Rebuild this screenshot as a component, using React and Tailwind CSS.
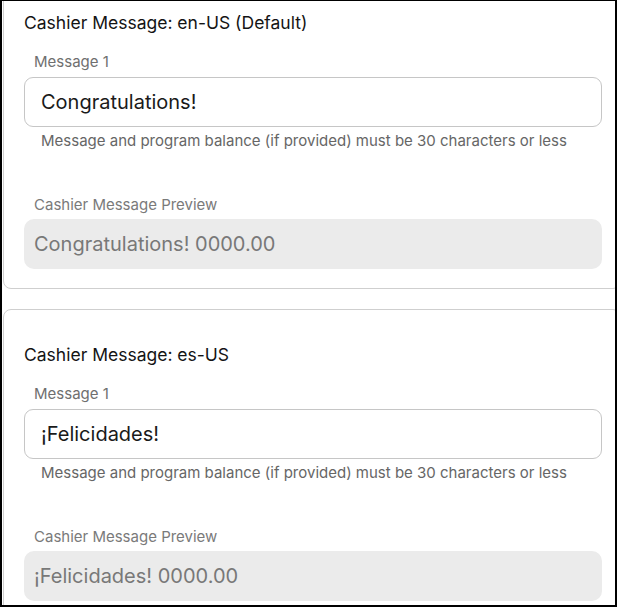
import React from "react";

const locales = [
  { code: "en-US (Default)", message: "Congratulations!" },
  { code: "es-US", message: "¡Felicidades!" },
];

function MessageCard({ code, message }) {
  return (
    <div className="mr-[-6px] rounded-lg border border-[#cfcfcf] bg-white pb-[19px] pl-[20px] pr-[18px] pt-[33px]">
      <h3 className="text-[17.5px] font-normal leading-6 text-[#141414]">
        Cashier Message: {code}
      </h3>
      <div className="mt-[17px] pl-[10px] text-[15px] leading-5 text-[#6f6f6f]">
        Message 1
      </div>
      <div className="mt-[5px] flex h-[50px] items-center rounded-[9px] border border-[#c6c6c6] px-4 text-[20px] text-[#1a1a1a]">
        {message}
      </div>
      <p className="mt-[4px] pl-[17px] text-[15px] leading-5 text-[#666666]">
        Message and program balance (if provided) must be 30 characters or less
      </p>
      <div className="mt-[44px] pl-[10px] text-[15px] leading-5 text-[#7a7a7a]">
        Cashier Message Preview
      </div>
      <div className="mt-[4px] flex h-[50px] items-center rounded-[10px] bg-[#ebebeb] px-[10px] text-[20px] text-[#787878]">
        {message} 0000.00
      </div>
    </div>
  );
}

export default function App() {
  return (
    <div
      className="h-[607px] w-[617px] overflow-hidden border-b-2 border-l-2 border-r-2 border-t border-black bg-white"
      style={{ fontFamily: "Inter, 'Noto Sans', sans-serif" }}
    >
      <div className="-mt-[24px] flex flex-col gap-[20px] pl-px">
        {locales.map((item) => (
          <MessageCard key={item.code} code={item.code} message={item.message} />
        ))}
      </div>
    </div>
  );
}
